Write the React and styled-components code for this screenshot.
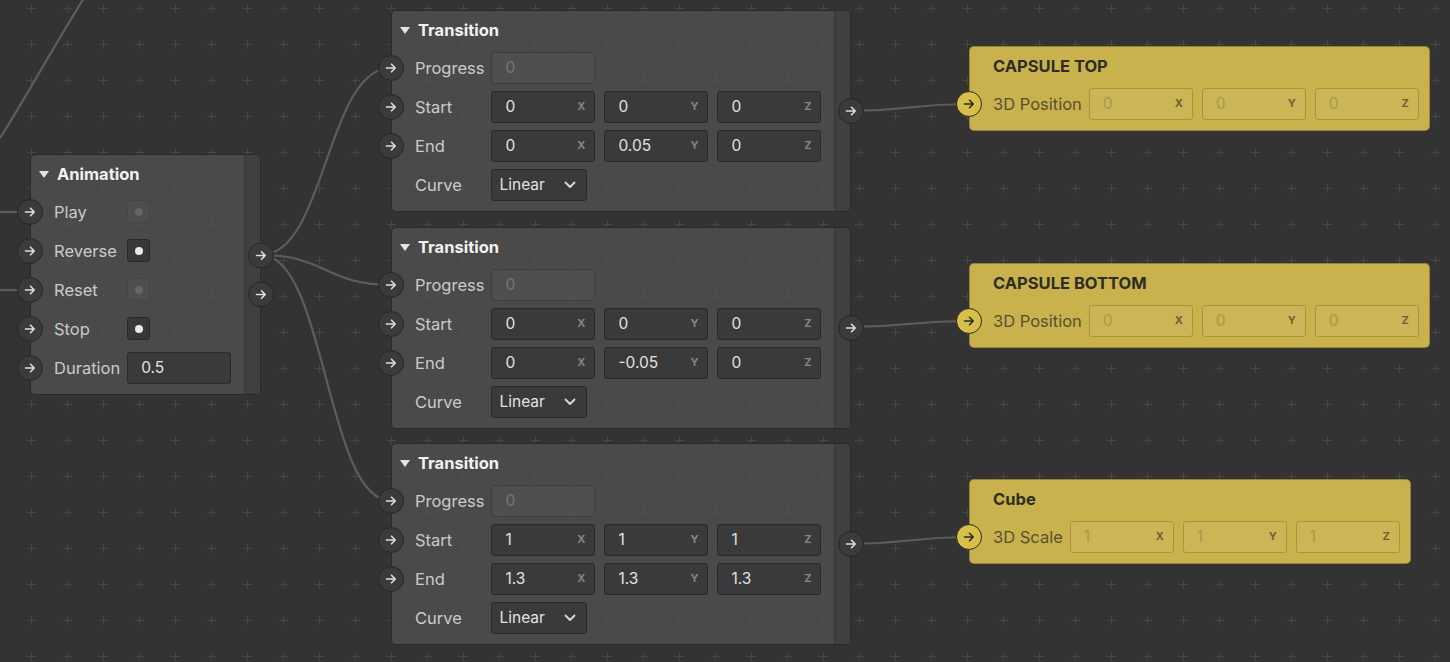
import React from 'react';
import styled, { createGlobalStyle } from 'styled-components';

const GlobalStyle = createGlobalStyle`
  html, body {
    margin: 0;
    padding: 0;
    background: #333333;
  }
  body {
    font-family: Inter, "Noto Sans", sans-serif;
    overflow: hidden;
  }
`;

const ArrowIcon = ({ color }) => (
  <svg width="14" height="14" viewBox="0 0 14 14" fill="none">
    <path d="M2.5 7H11M7.5 3.2L11.2 7L7.5 10.8" stroke={color} strokeWidth="1.6" strokeLinecap="round" strokeLinejoin="round" />
  </svg>
);

const Chevron = () => (
  <svg width="12" height="8" viewBox="0 0 12 8" fill="none">
    <path d="M1.5 1.5L6 6L10.5 1.5" stroke="#dcdcdc" strokeWidth="1.8" strokeLinecap="round" strokeLinejoin="round" />
  </svg>
);

const Caret = () => (
  <svg width="10" height="7" viewBox="0 0 10 7">
    <path d="M0 0H10L5 7Z" fill="#e4e4e4" />
  </svg>
);

const vec = (x, y, z) => [
  { axis: 'X', value: x },
  { axis: 'Y', value: y },
  { axis: 'Z', value: z },
];

const transitions = [
  { y: 10, start: vec('0', '0', '0'), end: vec('0', '0.05', '0') },
  { y: 227, start: vec('0', '0', '0'), end: vec('0', '-0.05', '0') },
  { y: 443, start: vec('1', '1', '1'), end: vec('1.3', '1.3', '1.3') },
];

const targets = [
  { x: 969, y: 46, title: 'CAPSULE TOP', label: '3D Position', values: vec('0', '0', '0') },
  { x: 969, y: 263, title: 'CAPSULE BOTTOM', label: '3D Position', values: vec('0', '0', '0') },
  { x: 969, y: 479, title: 'Cube', label: '3D Scale', values: vec('1', '1', '1') },
];

const wire = (x1, y1, x2, y2) => {
  const d = Math.max(40, (x2 - x1) / 2);
  return `M ${x1} ${y1} C ${x1 + d} ${y1}, ${x2 - d} ${y2}, ${x2} ${y2}`;
};

const wires = [
  'M 0 138 C 22 104, 55 44, 84 -2',
  'M -10 212 L 20 212',
  'M -10 290 L 20 290',
  wire(261, 255, 391, 68),
  wire(261, 255, 391, 285),
  wire(261, 255, 391, 501),
  wire(849, 111, 969, 104),
  wire(849, 327, 969, 321),
  wire(849, 544, 969, 537),
];

export default function App() {
  return (
    <>
      <GlobalStyle />
      <Canvas>
        <Wires width="1450" height="662">
          <defs>
            <pattern id="dots" x="13" y="-10" width="36" height="36" patternUnits="userSpaceOnUse">
              <rect x="14" y="18" width="9" height="1" fill="#474747" />
              <rect x="18" y="14" width="1" height="9" fill="#474747" />
            </pattern>
          </defs>
          <rect width="1450" height="662" fill="url(#dots)" />
          {wires.map((d, i) => (
            <path key={i} d={d} stroke="#5d5d5d" strokeWidth="2.2" fill="none" />
          ))}
        </Wires>

        <Node $x={30} $y={154}>
          <NodeMain>
            <Header>
              <Caret />
              Animation
            </Header>
            <Fields>
              {['Play', 'Reverse', 'Reset', 'Stop'].map((name, i) => (
                <React.Fragment key={name}>
                  <Label>
                    <InPort><ArrowIcon color="#dedede" /></InPort>
                    {name}
                  </Label>
                  <Check $on={i % 2 === 1} />
                </React.Fragment>
              ))}
              <Label>
                <InPort><ArrowIcon color="#dedede" /></InPort>
                Duration
              </Label>
              <Field>0.5</Field>
            </Fields>
          </NodeMain>
          <Strip />
          <OutPorts>
            <Port><ArrowIcon color="#dedede" /></Port>
            <Port><ArrowIcon color="#dedede" /></Port>
          </OutPorts>
        </Node>

        {transitions.map((t) => (
          <Node key={t.y} $x={391} $y={t.y}>
            <NodeMain>
              <Header>
                <Caret />
                Transition
              </Header>
              <Fields>
                <Label>
                  <InPort><ArrowIcon color="#dedede" /></InPort>
                  Progress
                </Label>
                <Field $tone="disabled">0</Field>
                <Label>
                  <InPort><ArrowIcon color="#dedede" /></InPort>
                  Start
                </Label>
                <VecRow>
                  {t.start.map((v) => (
                    <Field key={v.axis}>
                      {v.value}
                      <Axis>{v.axis}</Axis>
                    </Field>
                  ))}
                </VecRow>
                <Label>
                  <InPort><ArrowIcon color="#dedede" /></InPort>
                  End
                </Label>
                <VecRow>
                  {t.end.map((v) => (
                    <Field key={v.axis}>
                      {v.value}
                      <Axis>{v.axis}</Axis>
                    </Field>
                  ))}
                </VecRow>
                <Label>Curve</Label>
                <Select>
                  Linear
                  <Chevron />
                </Select>
              </Fields>
            </NodeMain>
            <Strip />
            <OutPorts>
              <Port><ArrowIcon color="#dedede" /></Port>
            </OutPorts>
          </Node>
        ))}

        {targets.map((t) => (
          <Node key={t.title} $x={t.x} $y={t.y} $accent>
            <NodeMain $accent>
              <Title>{t.title}</Title>
              <Fields>
                <Label $accent>
                  <InPort $accent><ArrowIcon color="#2c2b25" /></InPort>
                  {t.label}
                </Label>
                <VecRow>
                  {t.values.map((v) => (
                    <Field key={v.axis} $tone="accent">
                      {v.value}
                      <Axis $accent>{v.axis}</Axis>
                    </Field>
                  ))}
                </VecRow>
              </Fields>
            </NodeMain>
          </Node>
        ))}
      </Canvas>
    </>
  );
}

const Canvas = styled.div`
  position: relative;
  width: 1450px;
  height: 662px;
  overflow: hidden;
  background: #333333;
`;

const Wires = styled.svg`
  position: absolute;
  left: 0;
  top: 0;
`;

const Node = styled.div`
  position: absolute;
  left: ${(p) => p.$x}px;
  top: ${(p) => p.$y}px;
  display: flex;
  box-sizing: border-box;
  background: ${(p) => (p.$accent ? '#c9b24d' : 'rgba(80, 80, 80, 0.8)')};
  border: 1px solid ${(p) => (p.$accent ? 'rgba(0, 0, 0, 0.25)' : '#2a2a2a')};
  border-radius: 5px;
`;

const NodeMain = styled.div`
  padding: 6px ${(p) => (p.$accent ? 10 : 13)}px 10px 23px;
`;

const Header = styled.div`
  height: 26px;
  margin-left: -15px;
  margin-bottom: 8px;
  display: flex;
  align-items: center;
  gap: 8px;
  font-size: 16.5px;
  font-weight: 700;
  color: #f2f2f2;
`;

const Title = styled.div`
  height: 26px;
  margin-bottom: 8px;
  display: flex;
  align-items: center;
  font-size: 16.5px;
  font-weight: 700;
  color: #2f2d25;
`;

const Fields = styled.div`
  display: grid;
  grid-template-columns: max-content max-content;
  grid-auto-rows: 33px;
  column-gap: 7px;
  row-gap: 6px;
  align-items: center;
`;

const Label = styled.div`
  position: relative;
  height: 100%;
  display: flex;
  align-items: center;
  font-size: 16.5px;
  color: ${(p) => (p.$accent ? '#575030' : '#cacaca')};
`;

const Port = styled.div`
  width: 26px;
  height: 26px;
  box-sizing: border-box;
  border-radius: 50%;
  display: flex;
  align-items: center;
  justify-content: center;
  background: ${(p) => (p.$accent ? '#d8bf4a' : '#3b3b3b')};
  border: ${(p) => (p.$accent ? '1.5px solid #2c2b25' : '1px solid #262626')};
`;

const InPort = styled(Port)`
  position: absolute;
  left: -37px;
  top: 50%;
  margin-top: -13px;
`;

const OutPorts = styled.div`
  position: absolute;
  right: -14px;
  top: 50%;
  transform: translateY(-50%);
  display: flex;
  flex-direction: column;
  gap: 13px;
`;

const Strip = styled.div`
  width: 15px;
  background: #404040;
  border-left: 1px solid #363636;
  border-radius: 0 4px 4px 0;
`;

const VecRow = styled.div`
  display: flex;
  gap: 9px;
`;

const fieldTones = {
  dark: { bg: '#3a3a3a', border: '#2a2a2a', color: '#e2e2e2' },
  disabled: { bg: 'rgba(90, 90, 90, 0.35)', border: '#3d3d3d', color: '#777777' },
  accent: { bg: 'rgba(255, 255, 255, 0.05)', border: '#a8953e', color: '#a6984f' },
};

const Field = styled.div`
  position: relative;
  width: 104px;
  height: 32px;
  box-sizing: border-box;
  padding-left: 13px;
  display: flex;
  align-items: center;
  border-radius: 3px;
  font-size: 15.5px;
  background: ${(p) => fieldTones[p.$tone || 'dark'].bg};
  border: ${(p) => (p.$tone === 'accent' ? 1.5 : 1)}px solid ${(p) => fieldTones[p.$tone || 'dark'].border};
  color: ${(p) => fieldTones[p.$tone || 'dark'].color};
`;

const Axis = styled.span`
  position: absolute;
  right: 9px;
  top: 7px;
  font-size: 11px;
  font-weight: 700;
  color: ${(p) => (p.$accent ? '#6c6133' : '#858585')};
`;

const Check = styled.div`
  width: 23px;
  height: 23px;
  box-sizing: border-box;
  border-radius: 3px;
  display: flex;
  align-items: center;
  justify-content: center;
  background: ${(p) => (p.$on ? '#383838' : 'rgba(90, 90, 90, 0.3)')};
  border: 1px solid ${(p) => (p.$on ? '#282828' : '#454545')};

  &::after {
    content: '';
    width: 8px;
    height: 8px;
    border-radius: 50%;
    background: ${(p) => (p.$on ? '#e8e8e8' : '#656565')};
  }
`;

const Select = styled.div`
  width: 96px;
  height: 32px;
  box-sizing: border-box;
  padding: 0 10px 0 7px;
  display: flex;
  align-items: center;
  justify-content: space-between;
  border-radius: 3px;
  background: #3a3a3a;
  border: 1px solid #2a2a2a;
  font-size: 15.5px;
  color: #e2e2e2;
`;
